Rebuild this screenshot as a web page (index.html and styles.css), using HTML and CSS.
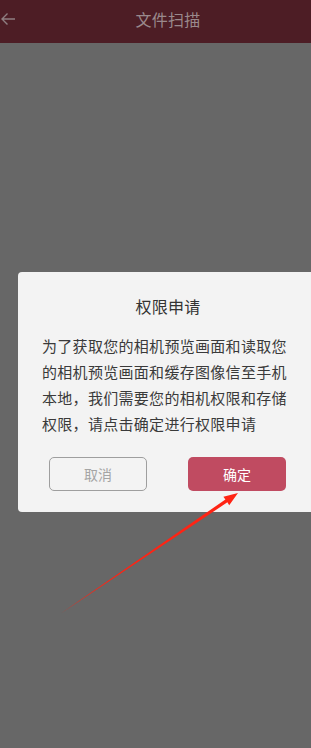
FILE: index.html
```html
<!DOCTYPE html>
<html lang="zh">
<head>
<meta charset="utf-8">
<link rel="stylesheet" href="styles.css">
</head>
<body>
<div class="screen">
  <header class="topbar">
    <svg class="back" width="16" height="14" viewBox="0 0 16 14"><path d="M15 7H2M7.5 1.5L2 7l5.5 5.5" fill="none" stroke="#8e7e81" stroke-width="1.4"/></svg>
    <div class="title">文件扫描</div>
  </header>
  <main class="overlay">
    <div class="dialog">
      <div class="dlg-title">权限申请</div>
      <p class="dlg-body">为了获取您的相机预览画面和读取您的相机预览画面和缓存图像信至手机本地，我们需要您的相机权限和存储权限，请点击确定进行权限申请</p>
      <div class="actions">
        <button class="btn cancel">取消</button>
        <button class="btn ok">确定</button>
      </div>
    </div>
  </main>
</div>
<svg class="annot" width="311" height="748" viewBox="0 0 311 748"><polygon points="60,614 227.4,502.3 229.2,505.2 238,493 223.4,496.8 225.4,499.5" fill="#ff2414"/></svg>
</body>
</html>
```
FILE: styles.css
```css
html, body {
  margin: 0;
  padding: 0;
  width: 311px;
  height: 748px;
  overflow: hidden;
  background: #676767;
  font-family: "Noto Sans CJK SC", "Noto Sans", sans-serif;
}
.screen {
  width: 336px;
  height: 748px;
  display: flex;
  flex-direction: column;
}
.topbar {
  height: 43px;
  background: #4d1d25;
  display: flex;
  align-items: center;
  justify-content: center;
  position: relative;
}
.back {
  position: absolute;
  left: 0;
  top: 12px;
}
.title {
  color: #9a898c;
  font-size: 16px;
  line-height: 22px;
  margin-top: -6px;
  letter-spacing: 0.3px;
}
.overlay {
  flex: 1;
  background: #676767;
}
.dialog {
  margin: 229px 0 0 18px;
  width: 300px;
  background: #f3f3f3;
  border-radius: 4px;
  padding: 23px 0 21px;
  box-sizing: border-box;
  display: flex;
  flex-direction: column;
}
.dlg-title {
  text-align: center;
  font-size: 16px;
  line-height: 22px;
  color: #333;
  letter-spacing: 0.3px;
}
.dlg-body {
  margin: 16px 0 0 24px;
  width: 252px;
  font-size: 15px;
  line-height: 26px;
  letter-spacing: 0.3px;
  color: #3a3a3a;
}
.actions {
  margin-top: 20px;
  display: flex;
  justify-content: space-between;
  padding: 0 32px 0 31px;
}
.btn {
  width: 98px;
  height: 34px;
  border-radius: 5px;
  font-family: inherit;
  font-size: 14px;
  padding: 0;
}
.cancel {
  background: transparent;
  border: 1px solid #9e9e9e;
  color: #a5a5a5;
}
.ok {
  background: #c04b61;
  border: none;
  color: #fff;
}
.annot {
  position: absolute;
  left: 0;
  top: 0;
  pointer-events: none;
}
```
